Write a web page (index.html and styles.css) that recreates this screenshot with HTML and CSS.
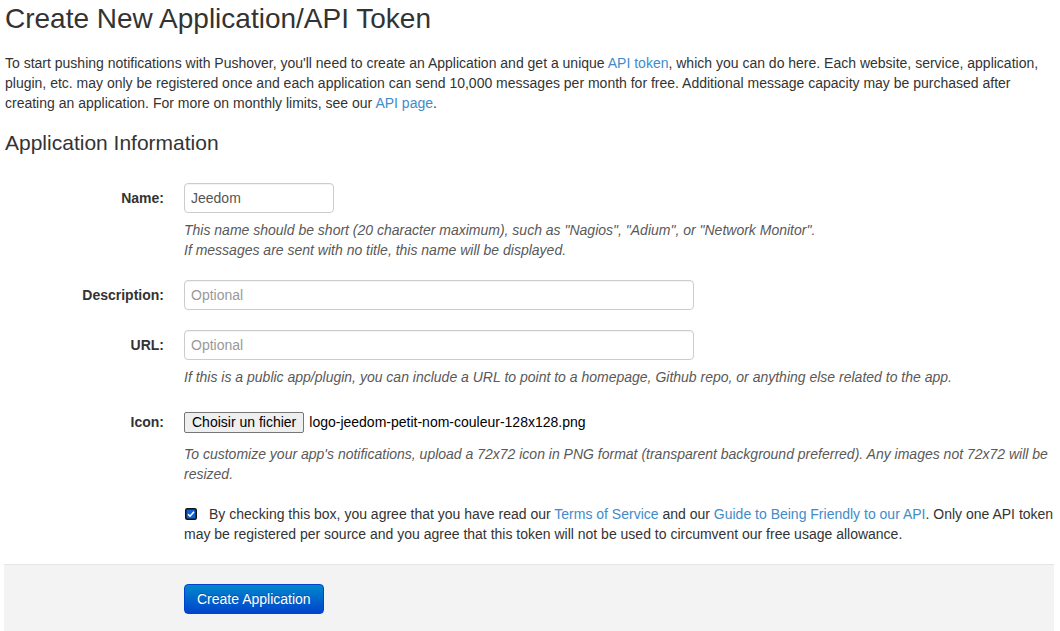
FILE: index.html
```html
<!DOCTYPE html>
<html lang="en">
<head>
<meta charset="utf-8">
<title>Create New Application/API Token</title>
<link rel="stylesheet" href="styles.css">
</head>
<body>
<div class="page">
  <h1 class="title">Create New Application/API Token</h1>
  <p class="intro">To start pushing notifications with Pushover, you'll need to create an Application and get a unique <a href="#">API token</a>, which you can do here. Each website, service, application, plugin, etc. may only be registered once and each application can send 10,000 messages per month for free. Additional message capacity may be purchased after creating an application. For more on monthly limits, see our <a href="#">API page</a>.</p>
  <form class="form">
    <div class="legend">Application Information</div>

    <div class="group">
      <label class="label">Name:</label>
      <div class="controls">
        <div class="input input-short">Jeedom</div>
        <p class="help">This name should be short (20 character maximum), such as "Nagios", "Adium", or "Network Monitor".<br>If messages are sent with no title, this name will be displayed.</p>
      </div>
    </div>

    <div class="group">
      <label class="label">Description:</label>
      <div class="controls">
        <div class="input input-long placeholder">Optional</div>
      </div>
    </div>

    <div class="group">
      <label class="label">URL:</label>
      <div class="controls">
        <div class="input input-long placeholder">Optional</div>
        <p class="help">If this is a public app/plugin, you can include a URL to point to a homepage, Github repo, or anything else related to the app.</p>
      </div>
    </div>

    <div class="group">
      <label class="label">Icon:</label>
      <div class="controls">
        <div class="file-row"><span class="file-btn">Choisir un fichier</span><span class="file-name">logo-jeedom-petit-nom-couleur-128x128.png</span></div>
        <p class="help">To customize your app's notifications, upload a 72x72 icon in PNG format (transparent background preferred). Any images not 72x72 will be resized.</p>
      </div>
    </div>

    <div class="group">
      <div class="spacer"></div>
      <div class="controls">
        <p class="agree"><span class="check"><svg viewBox="0 0 12 12" width="12" height="12"><rect x="0.75" y="0.75" width="10.5" height="10.5" rx="1.5" fill="#0b62d6" stroke="#111" stroke-width="1.5"/><path d="M3 6.2 L5 8.2 L9 3.8" fill="none" stroke="#fff" stroke-width="1.6"/></svg></span>By checking this box, you agree that you have read our <a href="#">Terms of Service</a> and our <a href="#">Guide to Being Friendly to our API</a>. Only one API token may be registered per source and you agree that this token will not be used to circumvent our free usage allowance.</p>
      </div>
    </div>

    <div class="actions">
      <span class="btn-primary">Create Application</span>
    </div>
  </form>
</div>
</body>
</html>
```
FILE: styles.css
```css
html, body {
  margin: 0;
  padding: 0;
  background: #fff;
}
body {
  font-family: "Liberation Sans", Arial, sans-serif;
  font-size: 14px;
  line-height: 20px;
  color: #333;
}
a {
  color: #428bca;
  text-decoration: none;
}
.page {
  width: 1050px;
  margin-left: 4px;
}
.title {
  margin: 0;
  font-size: 28px;
  font-weight: normal;
  line-height: 38px;
  color: #333;
  padding-left: 1px;
}
.intro {
  margin: 15px 0 0 0;
  padding-left: 1px;
}
.legend {
  font-size: 21px;
  line-height: 40px;
  margin: 10px 0 20px 0;
  padding-left: 1px;
}
.group {
  display: grid;
  grid-template-columns: 160px 1fr;
  column-gap: 20px;
  margin-bottom: 20px;
}
.label {
  text-align: right;
  font-weight: bold;
  padding-top: 5px;
}
.input {
  box-sizing: border-box;
  height: 30px;
  padding: 4px 6px;
  border: 1px solid #ccc;
  border-radius: 4px;
  color: #555;
  box-shadow: inset 0 1px 1px rgba(0,0,0,0.05);
}
.input-short { width: 150px; }
.input-long { width: 510px; }
.placeholder { color: #999; }
.help {
  margin: 7px 0 0 0;
  font-style: italic;
  color: #595959;
}
.file-row {
  display: flex;
  align-items: center;
  height: 30px;
}
.file-btn {
  box-sizing: border-box;
  height: 21px;
  line-height: 19px;
  padding: 0 7px;
  border: 1px solid #767676;
  border-radius: 2px;
  background: #efefef;
  color: #000;
  font-size: 14px;
}
.file-name {
  margin-left: 5px;
  color: #000;
}
.agree {
  margin: 0 -12px 0 0;
}
.check {
  display: inline-block;
  width: 12px;
  height: 12px;
  margin: 0 12px 0 1px;
  vertical-align: -1px;
}
.check svg { display: block; }
.actions {
  margin-top: 20px;
  border-top: 1px solid #e5e5e5;
  background: #f3f3f3;
  padding: 19px 0 20px 180px;
}
.btn-primary {
  display: inline-block;
  box-sizing: border-box;
  height: 30px;
  padding: 4px 12px;
  border: 1px solid #0044cc;
  border-radius: 4px;
  background: linear-gradient(#0088cc, #0044cc);
  color: #fff;
  font-size: 14px;
  line-height: 20px;
  text-shadow: 0 -1px 0 rgba(0,0,0,0.25);
}
```
